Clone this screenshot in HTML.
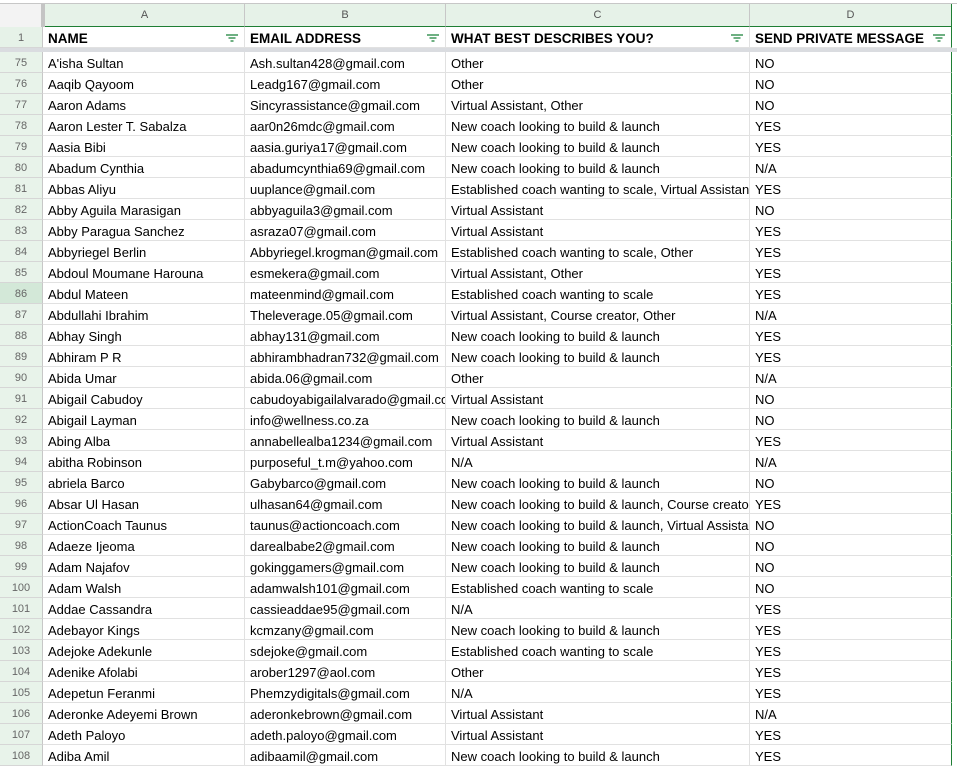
<!DOCTYPE html>
<html><head><meta charset="utf-8"><style>
*{box-sizing:border-box;margin:0;padding:0}
body{width:957px;height:768px;overflow:hidden;background:#fff;font-family:"Liberation Sans",Arial,sans-serif;position:relative}
.top{position:absolute;left:0;top:0;width:957px;height:4px;background:#fff;border-bottom:1px solid #c7c7c7}
.colhdr{position:absolute;top:4px;height:23px;background:#e6f2e8;border-right:1px solid #c7c7c7;color:#555;font-size:11px;text-align:center;line-height:22px;border-bottom:1px solid #1e7e34}
.corner{position:absolute;left:0;top:4px;width:45px;height:23px;background:#f3f3f3;border-right:4px solid #c4c4c4}
.row{position:absolute;left:0;width:957px;height:21px}
.rn{position:absolute;left:0;width:43px;height:21px;background:#e8f3ea;border-right:1px solid #c7c7c7;border-bottom:1px solid #d6d6d6;color:#666;font-size:11px;text-align:center;line-height:22px}
.c{position:absolute;top:0;height:21px;border-right:1px solid #e1e1e1;border-bottom:1px solid #e1e1e1;font-size:13px;line-height:23px;padding-left:5px;white-space:nowrap;overflow:hidden;color:#000}
.a{left:43px;width:202px}.b{left:245px;width:201px}.cc{left:446px;width:304px}.d{left:750px;width:202px;border-right:1px solid #1e7e34}
.h .c{font-weight:bold;font-size:13.5px;line-height:23px}
.f{position:absolute;right:6px;top:7px;width:12px;height:8px}
.freeze{position:absolute;left:0;top:48px;width:957px;height:4px;background:#dadce0}
</style></head><body>
<div class="top"></div>
<div class="corner"></div>
<div class="colhdr" style="left:45px;width:200px">A</div>
<div class="colhdr" style="left:245px;width:201px">B</div>
<div class="colhdr" style="left:446px;width:304px">C</div>
<div class="colhdr" style="left:750px;width:202px;border-right:1px solid #1e7e34">D</div>

<div class="row h" style="top:27px">
<div class="rn" style="background:#e6f2e8">1</div>
<div class="c a">NAME<svg class="f" viewBox="0 0 12 8"><path d="M0 1h12M2.5 4h7M4.5 7h3" stroke="#188038" stroke-width="1.3"/></svg></div>
<div class="c b">EMAIL ADDRESS<svg class="f" viewBox="0 0 12 8"><path d="M0 1h12M2.5 4h7M4.5 7h3" stroke="#188038" stroke-width="1.3"/></svg></div>
<div class="c cc">WHAT BEST DESCRIBES YOU?<svg class="f" viewBox="0 0 12 8"><path d="M0 1h12M2.5 4h7M4.5 7h3" stroke="#188038" stroke-width="1.3"/></svg></div>
<div class="c d">SEND PRIVATE MESSAGE<svg class="f" viewBox="0 0 12 8"><path d="M0 1h12M2.5 4h7M4.5 7h3" stroke="#188038" stroke-width="1.3"/></svg></div>
</div>
<div class="freeze"></div>

<div class="row" style="top:52px"><div class="rn">75</div><div class="c a">A'isha Sultan</div><div class="c b">Ash.sultan428@gmail.com</div><div class="c cc">Other</div><div class="c d">NO</div></div>
<div class="row" style="top:73px"><div class="rn">76</div><div class="c a">Aaqib Qayoom</div><div class="c b">Leadg167@gmail.com</div><div class="c cc">Other</div><div class="c d">NO</div></div>
<div class="row" style="top:94px"><div class="rn">77</div><div class="c a">Aaron Adams</div><div class="c b">Sincyrassistance@gmail.com</div><div class="c cc">Virtual Assistant, Other</div><div class="c d">NO</div></div>
<div class="row" style="top:115px"><div class="rn">78</div><div class="c a">Aaron Lester T. Sabalza</div><div class="c b">aar0n26mdc@gmail.com</div><div class="c cc">New coach looking to build &amp; launch</div><div class="c d">YES</div></div>
<div class="row" style="top:136px"><div class="rn">79</div><div class="c a">Aasia Bibi</div><div class="c b">aasia.guriya17@gmail.com</div><div class="c cc">New coach looking to build &amp; launch</div><div class="c d">YES</div></div>
<div class="row" style="top:157px"><div class="rn">80</div><div class="c a">Abadum Cynthia</div><div class="c b">abadumcynthia69@gmail.com</div><div class="c cc">New coach looking to build &amp; launch</div><div class="c d">N/A</div></div>
<div class="row" style="top:178px"><div class="rn">81</div><div class="c a">Abbas Aliyu</div><div class="c b">uuplance@gmail.com</div><div class="c cc">Established coach wanting to scale, Virtual Assistant</div><div class="c d">YES</div></div>
<div class="row" style="top:199px"><div class="rn">82</div><div class="c a">Abby Aguila Marasigan</div><div class="c b">abbyaguila3@gmail.com</div><div class="c cc">Virtual Assistant</div><div class="c d">NO</div></div>
<div class="row" style="top:220px"><div class="rn">83</div><div class="c a">Abby Paragua Sanchez</div><div class="c b">asraza07@gmail.com</div><div class="c cc">Virtual Assistant</div><div class="c d">YES</div></div>
<div class="row" style="top:241px"><div class="rn">84</div><div class="c a">Abbyriegel Berlin</div><div class="c b">Abbyriegel.krogman@gmail.com</div><div class="c cc">Established coach wanting to scale, Other</div><div class="c d">YES</div></div>
<div class="row" style="top:262px"><div class="rn">85</div><div class="c a">Abdoul Moumane Harouna</div><div class="c b">esmekera@gmail.com</div><div class="c cc">Virtual Assistant, Other</div><div class="c d">YES</div></div>
<div class="row" style="top:283px"><div class="rn" style="background:#d3e8d8">86</div><div class="c a">Abdul Mateen</div><div class="c b">mateenmind@gmail.com</div><div class="c cc">Established coach wanting to scale</div><div class="c d">YES</div></div>
<div class="row" style="top:304px"><div class="rn">87</div><div class="c a">Abdullahi Ibrahim</div><div class="c b">Theleverage.05@gmail.com</div><div class="c cc">Virtual Assistant, Course creator, Other</div><div class="c d">N/A</div></div>
<div class="row" style="top:325px"><div class="rn">88</div><div class="c a">Abhay Singh</div><div class="c b">abhay131@gmail.com</div><div class="c cc">New coach looking to build &amp; launch</div><div class="c d">YES</div></div>
<div class="row" style="top:346px"><div class="rn">89</div><div class="c a">Abhiram P R</div><div class="c b">abhirambhadran732@gmail.com</div><div class="c cc">New coach looking to build &amp; launch</div><div class="c d">YES</div></div>
<div class="row" style="top:367px"><div class="rn">90</div><div class="c a">Abida Umar</div><div class="c b">abida.06@gmail.com</div><div class="c cc">Other</div><div class="c d">N/A</div></div>
<div class="row" style="top:388px"><div class="rn">91</div><div class="c a">Abigail Cabudoy</div><div class="c b">cabudoyabigailalvarado@gmail.com</div><div class="c cc">Virtual Assistant</div><div class="c d">NO</div></div>
<div class="row" style="top:409px"><div class="rn">92</div><div class="c a">Abigail Layman</div><div class="c b">info@wellness.co.za</div><div class="c cc">New coach looking to build &amp; launch</div><div class="c d">NO</div></div>
<div class="row" style="top:430px"><div class="rn">93</div><div class="c a">Abing Alba</div><div class="c b">annabellealba1234@gmail.com</div><div class="c cc">Virtual Assistant</div><div class="c d">YES</div></div>
<div class="row" style="top:451px"><div class="rn">94</div><div class="c a">abitha Robinson</div><div class="c b">purposeful_t.m@yahoo.com</div><div class="c cc">N/A</div><div class="c d">N/A</div></div>
<div class="row" style="top:472px"><div class="rn">95</div><div class="c a">abriela Barco</div><div class="c b">Gabybarco@gmail.com</div><div class="c cc">New coach looking to build &amp; launch</div><div class="c d">NO</div></div>
<div class="row" style="top:493px"><div class="rn">96</div><div class="c a">Absar Ul Hasan</div><div class="c b">ulhasan64@gmail.com</div><div class="c cc">New coach looking to build &amp; launch, Course creator</div><div class="c d">YES</div></div>
<div class="row" style="top:514px"><div class="rn">97</div><div class="c a">ActionCoach Taunus</div><div class="c b">taunus@actioncoach.com</div><div class="c cc">New coach looking to build &amp; launch, Virtual Assistant</div><div class="c d">NO</div></div>
<div class="row" style="top:535px"><div class="rn">98</div><div class="c a">Adaeze Ijeoma</div><div class="c b">darealbabe2@gmail.com</div><div class="c cc">New coach looking to build &amp; launch</div><div class="c d">NO</div></div>
<div class="row" style="top:556px"><div class="rn">99</div><div class="c a">Adam Najafov</div><div class="c b">gokinggamers@gmail.com</div><div class="c cc">New coach looking to build &amp; launch</div><div class="c d">NO</div></div>
<div class="row" style="top:577px"><div class="rn">100</div><div class="c a">Adam Walsh</div><div class="c b">adamwalsh101@gmail.com</div><div class="c cc">Established coach wanting to scale</div><div class="c d">NO</div></div>
<div class="row" style="top:598px"><div class="rn">101</div><div class="c a">Addae Cassandra</div><div class="c b">cassieaddae95@gmail.com</div><div class="c cc">N/A</div><div class="c d">YES</div></div>
<div class="row" style="top:619px"><div class="rn">102</div><div class="c a">Adebayor Kings</div><div class="c b">kcmzany@gmail.com</div><div class="c cc">New coach looking to build &amp; launch</div><div class="c d">YES</div></div>
<div class="row" style="top:640px"><div class="rn">103</div><div class="c a">Adejoke Adekunle</div><div class="c b">sdejoke@gmail.com</div><div class="c cc">Established coach wanting to scale</div><div class="c d">YES</div></div>
<div class="row" style="top:661px"><div class="rn">104</div><div class="c a">Adenike Afolabi</div><div class="c b">arober1297@aol.com</div><div class="c cc">Other</div><div class="c d">YES</div></div>
<div class="row" style="top:682px"><div class="rn">105</div><div class="c a">Adepetun Feranmi</div><div class="c b">Phemzydigitals@gmail.com</div><div class="c cc">N/A</div><div class="c d">YES</div></div>
<div class="row" style="top:703px"><div class="rn">106</div><div class="c a">Aderonke Adeyemi Brown</div><div class="c b">aderonkebrown@gmail.com</div><div class="c cc">Virtual Assistant</div><div class="c d">N/A</div></div>
<div class="row" style="top:724px"><div class="rn">107</div><div class="c a">Adeth Paloyo</div><div class="c b">adeth.paloyo@gmail.com</div><div class="c cc">Virtual Assistant</div><div class="c d">YES</div></div>
<div class="row" style="top:745px"><div class="rn">108</div><div class="c a">Adiba Amil</div><div class="c b">adibaamil@gmail.com</div><div class="c cc">New coach looking to build &amp; launch</div><div class="c d">YES</div></div>
</body></html>
